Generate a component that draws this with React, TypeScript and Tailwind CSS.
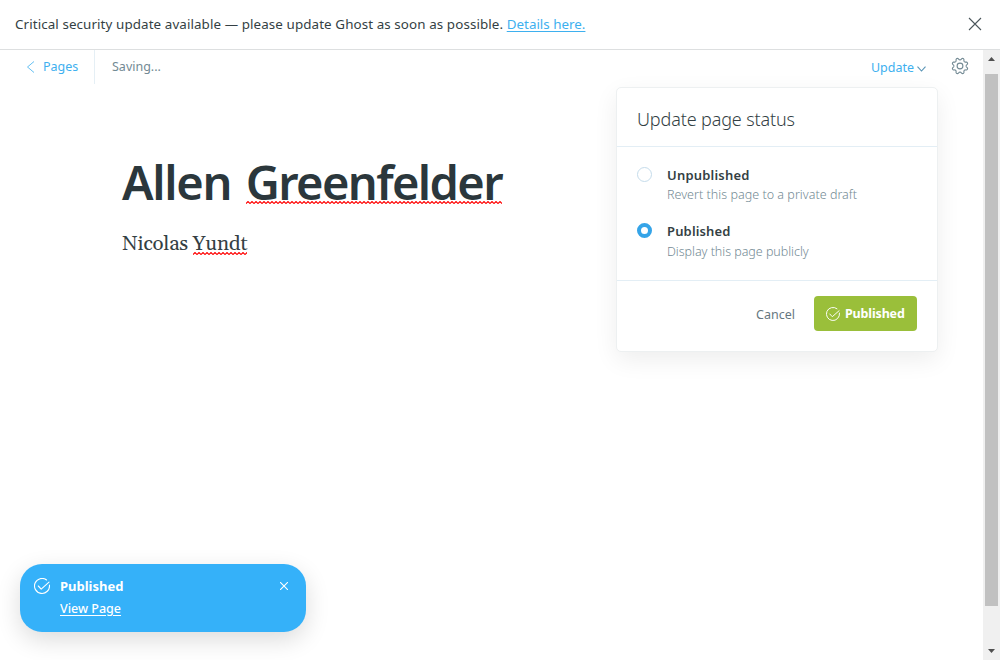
import React from "react";

function CheckCircle({ className }: { className: string }) {
  return (
    <svg className={className} viewBox="0 0 16 16" fill="none" stroke="currentColor" strokeWidth="1.1" strokeLinecap="round" strokeLinejoin="round">
      <path d="M15.450 7A7.500 7.500 0 1 1 12.600 2" />
      <path d="M4.300 8L7.200 11.100L15 4.200" />
    </svg>
  );
}

const gearOutline =
  Array.from({ length: 96 }, (_, i) => {
    const angle = (i / 96) * Math.PI * 2;
    const radius = 7.1 - 1.05 * Math.tanh(1.6 * Math.cos(8 * angle));
    const x = 9 + radius * Math.cos(angle);
    const y = 9 + radius * Math.sin(angle);
    return `${i === 0 ? "M" : "L"}${x.toFixed(2)} ${y.toFixed(2)}`;
  }).join("") + "Z";

function Gear() {
  return (
    <svg className="h-[18px] w-[18px]" viewBox="0 0 18 18" fill="none" stroke="#738a94" strokeWidth="1.1" strokeLinejoin="round">
      <circle cx="9" cy="9" r="2.9" />
      <path d={gearOutline} />
    </svg>
  );
}

function Misspelled({ children, id, drop }: { children: string; id: string; drop: string }) {
  return (
    <span className="relative inline-block">
      {children}
      <svg className={`absolute left-0 h-[3px] w-full ${drop}`} aria-hidden="true">
        <defs>
          <pattern id={id} width="4" height="3" patternUnits="userSpaceOnUse">
            <path d="M-1 1.500L0 2.500L2 .5L4 2.500L5 1.500" fill="none" stroke="#f00" strokeWidth="1.100" />
          </pattern>
        </defs>
        <rect width="100%" height="3" fill={`url(#${id})`} />
      </svg>
    </span>
  );
}

export default function App() {
  return (
    <div className="relative flex h-[660px] w-[1000px] flex-col overflow-hidden bg-white font-['Noto_Sans','Open_Sans',sans-serif] text-[#343f44]">
      <header className="flex h-[50px] shrink-0 items-center justify-between border-b border-[#dddfe0] pr-[18px] pl-[15px] text-[13.400px]">
        <p className="whitespace-nowrap">
          <span className="tracking-[0.09px]">Critical security update available — please update Ghost as soon as possible. </span>
          <a className="text-[#3eb0ef] underline underline-offset-2">Details here.</a>
        </p>
        <svg className="-mt-px h-[14px] w-[14px]" viewBox="0 0 14 14" stroke="#4b565b" strokeWidth="1.100"><path d="M1 1L13 13M13 1L1 13" /></svg>
      </header>
      <div className="flex min-h-0 flex-1">
        <main className="relative min-w-0 flex-1">
          <nav className="flex h-[34px] items-center text-[12.500px]">
            <a className="flex h-full w-[95px] items-center gap-2 border-r border-[#e5eff5] pl-[26px] text-[#3eb0ef]">
              <svg className="h-3 w-[9px]" viewBox="0 0 9 12" fill="none" stroke="currentColor" strokeWidth=".8"><path d="M8 .5L1.500 6L8 11.500" /></svg>
              <span>Pages</span>
            </a>
            <span className="ml-[17px] text-[#738a94]">Saving...</span>
            <span className="ml-auto flex items-center gap-[3px] pt-[2px] text-[#3eb0ef]">
              <span>Update</span>
              <svg className="mt-px h-[6px] w-[9px]" viewBox="0 0 9 6" fill="none" stroke="#5793b5" strokeWidth="1.100"><path d="M.5 .7L4.500 5L8.500 .7" /></svg>
            </span>
            <span className="mr-[14px] mb-[2px] ml-[25px]"><Gear /></span>
          </nav>
          <section className="pl-[122px]">
            <h1 className="mt-[66px] h-[64px] whitespace-nowrap text-[47px] leading-[64px] font-semibold tracking-[-1.280px] text-[#2b373c]">Allen <span className="ml-[3.500px] tracking-[-1.620px]"><Misspelled id="wave-title" drop="top-[51px]">Greenfelder</Misspelled></span></h1>
            <p className="mt-[14px] h-[32px] whitespace-nowrap font-['Gelasio','Liberation_Serif',serif] text-[20.500px] leading-[32px] tracking-[-0.160px]">Nicolas <Misspelled id="wave-body" drop="top-[24px]">Yundt</Misspelled></p>
          </section>
          <div className="absolute top-[37px] left-[616px] flex h-[265px] w-[322px] flex-col rounded-[5px] border border-[#edf0f1] bg-white shadow-[0_8px_24px_rgba(0,0,0,0.07)]">
            <h2 className="h-[59px] border-b border-[#e3eef5] pl-5 text-[18px] leading-[63px] font-light tracking-[-0.130px] whitespace-nowrap">Update page status</h2>
            <div className="h-[134px] border-b border-[#e3eef5] pl-5 text-[13px]">
              <div className="mt-[19px] flex h-[56px] gap-[15px]">
                <span className="mt-px h-[15px] w-[15px] rounded-full border border-[#c5dceb]" />
                <div className="leading-[19px]"><p className="font-semibold tracking-[0.200px]">Unpublished</p><p className="text-[12.500px] font-light tracking-[0.030px] text-[#738a94]">Revert this page to a private draft</p></div>
              </div>
              <div className="flex gap-[15px]">
                <span className="mt-px h-[15px] w-[15px] rounded-full border-4 border-[#35a4e8] bg-white" />
                <div><p className="leading-[19px] font-semibold tracking-[0.150px]">Published</p><p className="text-[12.500px] leading-[21px] font-light tracking-[-0.030px] text-[#738a94]">Display this page publicly</p></div>
              </div>
            </div>
            <div className="flex items-center justify-end gap-[19px] pt-[15px] pr-5">
              <span className="pt-[3px] text-[12.500px] text-[#66777f]">Cancel</span>
              <button className="flex h-[35px] w-[103px] items-center gap-[5px] rounded-[4px] bg-[#9abf3a] pl-3 text-[12.500px] font-bold tracking-[-0.150px] text-white"><CheckCircle className="h-[14px] w-[14px] shrink-0" /><span className="pt-[2px]">Published</span></button>
            </div>
          </div>
        </main>
        <div className="flex w-[17px] flex-col items-center bg-[#f0f0f0]">
          <svg className="h-[24px] w-[17px]" viewBox="0 0 17 24"><path d="M5 11L8.500 7L12 11Z" fill="#505050" /></svg>
          <div className="h-[532px] w-[13px] bg-[#c1c1c1]" />
          <svg className="mt-auto h-[17px] w-[17px]" viewBox="0 0 17 17"><path d="M5 6L8.500 10L12 6Z" fill="#505050" /></svg>
        </div>
      </div>
      <aside className="absolute top-[564px] left-5 flex h-[68px] w-[286px] rounded-[22px] bg-[#35b1f9] pt-[12px] pl-[14px] text-white shadow-[0_8px_24px_rgba(0,0,0,0.14)]">
        <CheckCircle className="mt-[2px] h-4 w-4" />
        <div className="ml-[10px] text-[13px] leading-[21px]"><p className="font-bold">Published</p><p className="mt-px text-[12.500px] font-medium underline underline-offset-2">View Page</p></div>
        <svg className="mt-[6px] mr-[18px] ml-auto h-[8px] w-[8px]" viewBox="0 0 8 8" stroke="white" strokeWidth="1.100"><path d="M0 0L8 8M8 0L0 8" /></svg>
      </aside>
    </div>
  );
}
